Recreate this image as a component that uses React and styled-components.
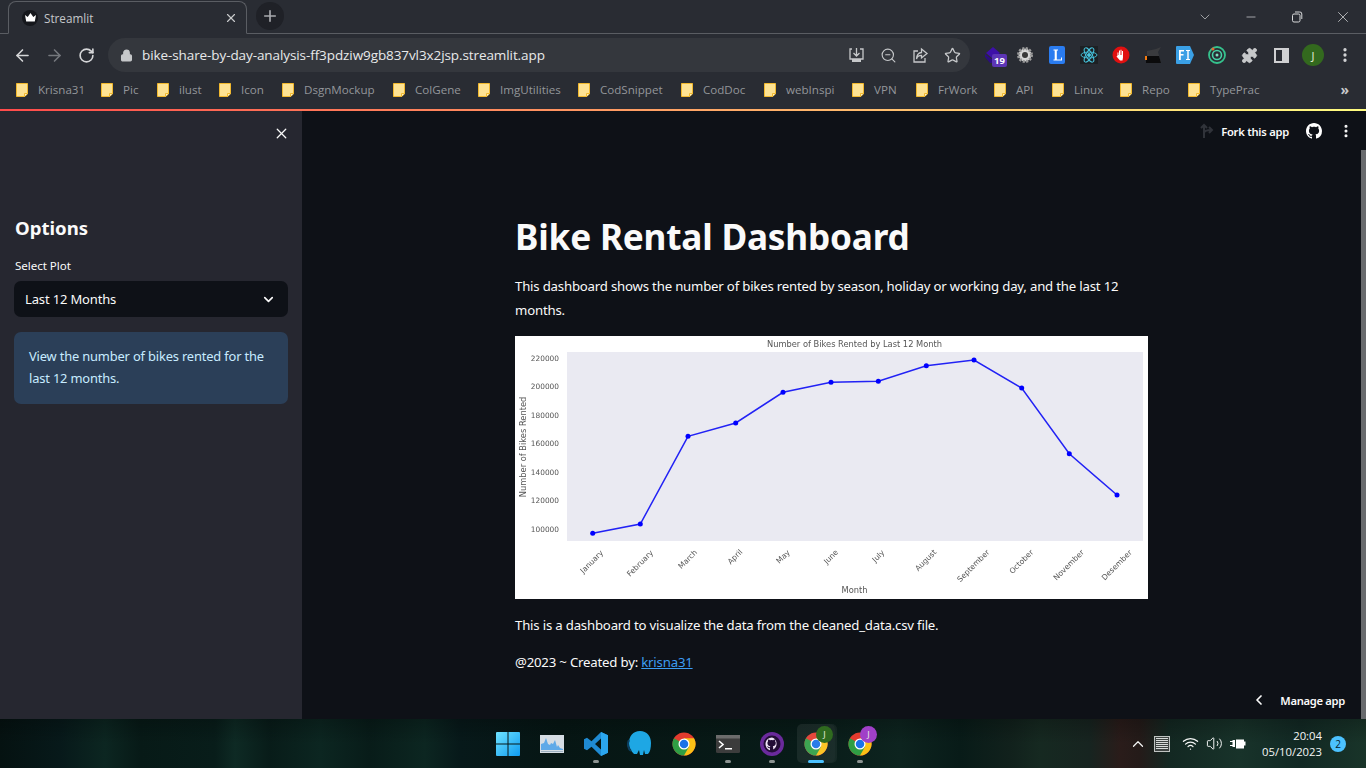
import React from "react";
import styled, { createGlobalStyle } from "styled-components";
import { ArrowLeft, ArrowRight, RotateCw, Lock, X, Plus, ChevronDown, ChevronLeft, ChevronUp, Minus, ZoomOut, Star, MoreVertical, Puzzle, Wifi, Volume2 } from "lucide-react";

const Global = createGlobalStyle`
  html, body { margin: 0; padding: 0; height: 100%; overflow: hidden; background: #0e1117; }
  * { box-sizing: border-box; }
`;

const Win = styled.div`
  width: 1366px; height: 768px; display: flex; flex-direction: column; overflow: hidden;
  font-family: "Open Sans", "Noto Sans", sans-serif;
`;

/* ---------- tab strip ---------- */
const TabStrip = styled.div`
  height: 34px; flex: none; background: #292c33; display: flex; align-items: flex-end; padding-left: 8px;
  border-bottom: 1px solid #5a5d63; position: relative;
`;
const Tab = styled.div`
  width: 239px; height: 33px; margin-bottom: -1px; background: #292c33;
  border: 1px solid #5a5d63; border-bottom: 1px solid #292c33; border-radius: 8px 8px 0 0;
  display: flex; align-items: center; padding: 0 8px 0 13px; color: #c5c7ca; font-size: 11.7px;
`;
const TabIcon = styled.span`
  width: 16px; height: 16px; border-radius: 50%; background: #15171c; display: flex; align-items: center; justify-content: center; margin-right: 6px;
`;
const TabTitle = styled.span` flex: 1; `;
const NewTab = styled.div`
  width: 28px; height: 28px; margin: 0 0 3px 9px; border-radius: 50%; background: #1f2127; color: #a9abaf; display: flex; align-items: center; justify-content: center;
`;
const WinControls = styled.div`
  margin-left: auto; width: 184px; height: 33px; padding-left: 0; display: grid; grid-template-columns: repeat(4, 46px); align-items: center; justify-items: center; color: #d8d9db;
`;

/* ---------- toolbar ---------- */
const Toolbar = styled.div`
  height: 38px; flex: none; background: #292c33; display: flex; align-items: center; padding: 4px 0 0 6px;
`;
const NavBtn = styled.div`
  width: 32px; display: flex; justify-content: center; color: ${p => p.$dim ? "#75787d" : "#d5d6d8"};
`;
const Omni = styled.div`
  width: 862px; height: 34px; margin-left: 6px; border-radius: 17px; background: #34373d; display: flex; align-items: center; padding-left: 12px; color: #e8e9ea;
`;
const Url = styled.span` margin-left: 9px; flex: 1; font-size: 13.5px; letter-spacing: -0.09px; white-space: nowrap; `;
const OmniIcons = styled.div` display: flex; color: #c6c8ca; margin-right: 2px; `;
const OmniIcon = styled.span` width: 32px; display: flex; justify-content: center; `;
const Exts = styled.div` display: flex; margin-left: 7px; `;
const Ext = styled.span` width: 32px; height: 24px; display: flex; align-items: center; justify-content: center; position: relative; color: #d5d6d8; `;
const ExtBadge = styled.span`
  position: absolute; left: 15px; top: 11px; width: 15px; height: 13px; background: #5c35b5; border-radius: 2px; color: #fff; font: 700 9.5px/13px "Open Sans", sans-serif; text-align: center;
`;
const Avatar = styled.span`
  width: 22px; height: 22px; border-radius: 50%; background: #33691e; color: #e7f0d8; font-size: 11px; display: flex; align-items: center; justify-content: center;
`;

/* ---------- bookmarks ---------- */
const Bookmarks = styled.div`
  height: 37px; flex: none; background: #292c33; display: flex; align-items: center; padding: 0 0 2px 16px; color: #93969a; font-size: 11.6px;
`;
const Bookmark = styled.div` display: flex; align-items: center; width: ${p => p.$w}px; flex: none; `;
const BookmarkLabel = styled.span` margin-left: 10px; white-space: nowrap; `;
const More = styled.span` margin-left: auto; margin-right: 17px; color: #c8c9cb; font-size: 14px; font-weight: 700; line-height: 1; `;

const Decoration = styled.div`
  height: 2px; flex: none; background: linear-gradient(90deg, #ff4b4b, #fffd80);
`;

/* ---------- app ---------- */
const AppRow = styled.div` flex: 1; min-height: 0; display: flex; position: relative; background: #0e1117; color: #fafafa; font-family: "Noto Sans", "Open Sans", sans-serif; `;
const Sidebar = styled.aside` width: 302px; flex: none; background: #262730; padding: 0 14px; display: flex; flex-direction: column; `;
const SideClose = styled.div` height: 44px; display: flex; align-items: center; justify-content: flex-end; color: #fafafa; `;
const SideCloseIcon = styled(X)` margin-right: -2px; `;
const SideTitle = styled.h2` margin: 59px 0 0 1px; font-size: 18.6px; line-height: 28px; font-weight: 700; `;
const SideLabel = styled.label` margin: 14px 0 0 1px; font-size: 11.6px; line-height: 20px; font-weight: 400; letter-spacing: -0.05px; display: block; `;
const Select = styled.div`
  margin-top: 5px; height: 36px; border-radius: 7px; background: #0e1117; display: flex; align-items: center; justify-content: space-between; padding: 0 12px 0 11px; font-size: 13px; letter-spacing: -0.15px;
`;
const Info = styled.div`
  margin-top: 15px; height: 72px; border-radius: 7px; background: #2b3f58; color: #c7ebff; padding: 13px 15px; font-size: 12.9px; letter-spacing: -0.17px; line-height: 22px;
`;
const Main = styled.main` flex: 1; padding-right: 5px; display: flex; justify-content: center; position: relative; `;
const Content = styled.div` width: 633px; padding-top: 102px; `;
const Title = styled.h1` margin: 0; font-size: 35.2px; line-height: 46px; font-weight: 700; letter-spacing: -0.2px; `;
const Para = styled.p` margin: ${p => p.$mt || 0}px 0 0; font-size: 13.2px; letter-spacing: -0.19px; line-height: 24px; `;
const A = styled.a` color: #3d9df3; text-decoration: underline; `;
const Chart = styled.svg` display: block; margin-top: 14px; width: 633px; height: 263px; background: #fff; `;
const ChartInk = styled.g` filter: blur(0.3px); `;
const TopRight = styled.div` position: absolute; top: 9px; right: 4px; height: 22px; display: flex; align-items: center; color: #fafafa; font-size: 11.2px; letter-spacing: -0.25px; font-weight: 600; `;
const ForkLabel = styled.span` margin: 0 17px 0 7px; `;
const Dots = styled.span` width: 32px; margin-left: 8px; display: flex; justify-content: center; `;
const ManageApp = styled.div` position: absolute; right: 21px; bottom: 11px; display: flex; align-items: center; gap: 13px; font-size: 11.2px; letter-spacing: -0.3px; font-weight: 600; `;
const ScrollThumb = styled.div` position: absolute; right: 0; top: 39px; bottom: 0; width: 5px; background: #686a6d; `;

/* ---------- taskbar ---------- */
const Taskbar = styled.footer`
  height: 49px; flex: none; position: relative; color: #f4f6f5; display: grid; grid-template-columns: 1fr auto 1fr; padding-left: 2px;
  background:
    linear-gradient(180deg, rgba(0,0,0,.22), rgba(0,0,0,0) 50%),
    linear-gradient(90deg, #051211 0, #07191a 60px, #0c2621 105px, #071a17 140px, #081d1a 215px, #0e2a24 235px, #081c19 270px, #0c2621 320px, #081c19 370px, #0c2621 425px, #07191a 460px, #061614 560px, #081b18 800px, #0d241f 900px, #081b18 960px, #11211c 1010px, #162921 1040px, #172420 1090px, #2a1c1a 1120px, #241b19 1140px, #132822 1170px, #18332a 1240px, #122924 1300px, #193429 1366px);
`;
const Center = styled.div` grid-column: 2; display: flex; align-items: center; `;
const TaskIcon = styled.div`
  width: 44px; height: 49px; display: flex; align-items: center; justify-content: center; position: relative;
  &::after {
    content: ""; display: ${p => p.$run ? "block" : "none"}; position: absolute; bottom: 5px; left: 50%; transform: translateX(-50%);
    width: ${p => p.$active ? 16 : 6}px; height: 3px; border-radius: 2px; background: ${p => p.$active ? "#4cc2ff" : "#8d9492"};
  }
  ${p => p.$active && `&::before { content: ""; position: absolute; left: 3px; top: 5px; width: 38px; height: 39px; border-radius: 5px; background: rgba(255,255,255,.07); box-shadow: 2px 0 0 rgba(255,255,255,.05); }`}
`;
const Corner = styled.span`
  position: absolute; right: 5px; top: 7px; width: 17px; height: 17px; border-radius: 50%; background: ${p => p.$bg}; color: #e6efe0; font-size: 9px; display: flex; align-items: center; justify-content: center;
`;
const Tray = styled.div` grid-column: 3; display: flex; align-items: center; justify-content: flex-end; padding-right: 20px; `;
const TrayIcon = styled.span` width: 24px; margin-left: ${p => p.$ml || 0}px; display: flex; justify-content: center; `;
const Clock = styled.div` margin: 0 8px 0 12px; text-align: right; font-size: 11.3px; line-height: 16px; `;
const Notif = styled.span` width: 16px; height: 16px; border-radius: 50%; background: #4cc2ff; color: #06222f; font-size: 10px; display: flex; align-items: center; justify-content: center; `;

/* ---------- data ---------- */
const pts = [[592.7,533.3],[640.3,524],[688,436.3],[735.7,423],[783,392.3],[831,382.3],[878.3,381.3],[926.3,365.7],[974,360],[1021.7,388],[1069.3,453.7],[1117,495]];
const yt = [[220000,358.3],[200000,386.7],[180000,415.2],[160000,443.7],[140000,472.2],[120000,500.5],[100000,529]];
const months = [["January",591.7,561.7],["February",640,563.3],["March",687.7,559.3],["April",735,556.7],["May",783,556.7],["June",831,556.7],["July",878.3,556],["August",925.7,560.3],["September",973.3,565.7],["October",1021.3,561.7],["November",1068.7,565],["Desember",1116.7,565]];
const bm = [["Krisna31",85],["Pic",56],["ilust",62],["Icon",63],["DsgnMockup",111],["ColGene",85],["ImgUtilities",100],["CodSnippet",103],["CodDoc",83],["webInspi",88],["VPN",64],["FrWork",78],["API",58],["Linux",68],["Repo",68],["TypePrac",100]];

const Folder = () => (
  <svg width="12" height="14" viewBox="0 0 12 14"><path d="M.5.5h11v10.300L8.800 13.500H.5z" fill="#fde293" stroke="#f2b92e" /><path d="M8.500 13.500v-3h3" fill="#fff3c4" stroke="#f2b92e" /></svg>
);
const Crown = () => (<svg width="11" height="9" viewBox="0 0 11 9"><path d="M0 2l2.700 2L5.500 0l2.800 4L11 2l-1.200 6.500H1.200z" fill="#fff" /></svg>);
const ChromeLogo = ({ s = 24 }) => (
  <svg width={s} height={s} viewBox="0 0 48 48">
    <circle cx="24" cy="24" r="23" fill="#e33b2e" />
    <path d="M24 47a23 23 0 0 0 20-34.500H24z" fill="#fbc116" />
    <path d="M4 12.500A23 23 0 0 0 24 47l10-17.500L24 24z" fill="#2f9e44" />
    <circle cx="24" cy="24" r="11" fill="#fff" /><circle cx="24" cy="24" r="8.500" fill="#1a73e8" />
  </svg>
);

export default function App() {
  return (
    <Win>
      <Global />
      <TabStrip>
        <Tab><TabIcon><Crown /></TabIcon><TabTitle>Streamlit</TabTitle><X size={14} color="#c8c9cb" /></Tab>
        <NewTab><Plus size={18} strokeWidth={2.2} /></NewTab>
        <WinControls>
          <ChevronDown size={16} strokeWidth={1} />
          <Minus size={14} strokeWidth={1.2} />
          <svg width="12" height="12" viewBox="0 0 12 12" fill="none" stroke="currentColor"><rect x="1.500" y="3" width="7.500" height="8" rx="1.500" /><path d="M4 1h4.500A2 2 0 0 1 10.800 3v5" /></svg>
          <X size={18} strokeWidth={1} />
        </WinControls>
      </TabStrip>
      <Toolbar>
        <NavBtn><ArrowLeft size={19} strokeWidth={2} /></NavBtn>
        <NavBtn $dim><ArrowRight size={19} strokeWidth={2} /></NavBtn>
        <NavBtn><RotateCw size={17} strokeWidth={2.3} /></NavBtn>
        <Omni>
          <Lock size={13} strokeWidth={2.4} color="#c6c8ca" fill="#c6c8ca" />
          <Url>bike-share-by-day-analysis-ff3pdziw9gb837vl3x2jsp.streamlit.app</Url>
          <OmniIcons>
            <OmniIcon><svg width="17" height="17" viewBox="0 0 17 17" fill="none" stroke="currentColor" strokeWidth="1.300"><path d="M4 2H2v10h13V2h-3M8.500 1v7.500M5.500 6l3 3 3-3" /><path d="M4 12h9v3H4z" fill="currentColor" stroke="none" /></svg></OmniIcon>
            <OmniIcon><ZoomOut size={17} strokeWidth={1.6} /></OmniIcon>
            <OmniIcon><svg width="17" height="17" viewBox="0 0 17 17" fill="none" stroke="currentColor" strokeWidth="1.300"><path d="M6 4H2v11h11v-4M9.500 2l5.500 4.500-5.500 4.500V8.300C6.500 8.300 5 10 4.500 12c0-3.500 2-6.500 5-6.500z" /></svg></OmniIcon>
            <OmniIcon><Star size={17} strokeWidth={1.8} /></OmniIcon>
          </OmniIcons>
        </Omni>
        <Exts>
          <Ext><svg width="18" height="18" viewBox="0 0 18 18"><path d="M9 1l7 6-7 6-7-6z" fill="#3d10a8" /><path d="M1 8l8 6 3 3H6L1 11z" fill="#2c0d80" /></svg><ExtBadge>19</ExtBadge></Ext>
          <Ext><svg width="18" height="18" viewBox="0 0 18 18"><circle cx="9" cy="9" r="6.500" fill="#d8d8d8" stroke="#9a9a9a" strokeWidth="3" strokeDasharray="2 1.400" /><circle cx="9" cy="9" r="3" fill="#3a3a3a" /></svg></Ext>
          <Ext><svg width="16" height="18" viewBox="0 0 16 18"><rect width="16" height="18" rx="2" fill="#2a7cf0" /><path d="M4.500 3.500h4.500v1H7.800v9H12v-2h1v3H4.500v-1h1.200v-9H4.500z" fill="#fff" /></svg></Ext>
          <Ext><svg width="18" height="18" viewBox="0 0 18 18" fill="none" stroke="#46c3dd" strokeWidth=".9"><rect width="18" height="18" fill="#1d2023" stroke="none" /><circle cx="9" cy="9" r="1.500" fill="#46c3dd" /><ellipse cx="9" cy="9" rx="8" ry="3" /><ellipse cx="9" cy="9" rx="8" ry="3" transform="rotate(60 9 9)" /><ellipse cx="9" cy="9" rx="8" ry="3" transform="rotate(120 9 9)" /></svg></Ext>
          <Ext><svg width="18" height="18" viewBox="0 0 18 18"><circle cx="9" cy="9" r="8.500" fill="#e01010" /><path d="M5.500 9.500V6.500h1V9h.5V4.500h1V9h.5V3.800h1V9h.5V5h1v6.500L10.500 14.500H8L4.500 10.500z" fill="#fff" /></svg></Ext>
          <Ext><svg width="18" height="18" viewBox="0 0 18 18"><path d="M3 5l9-2 5-2-3 5 3 11H3z" fill="#3a3b3e" /><path d="M2 10h13l2 7H2z" fill="#0b0b0c" /><path d="M1 10h2v4H1z" fill="#f47a10" /></svg></Ext>
          <Ext><svg width="18" height="18" viewBox="0 0 18 18"><path d="M1 0h13l4 9-4 9H1a1 1 0 0 1-1-1V1a1 1 0 0 1 1-1z" fill="#3aa0e6" /><path d="M3 4h5v1.500H4.800V8H7.500v1.500H4.800V14H3zM10 4h4v1h-1.300v8H14v1h-4v-1h1.300V5H10z" fill="#fff" /></svg></Ext>
          <Ext><svg width="18" height="18" viewBox="0 0 18 18" fill="none"><circle cx="9" cy="9" r="8" stroke="#35c28d" strokeWidth="1.800" /><circle cx="9" cy="9" r="4.500" stroke="#48d0a6" strokeWidth="1.600" /><circle cx="9" cy="9" r="1.500" fill="#7de0c0" /><circle cx="5" cy="3" r="1.500" fill="#e86a33" /></svg></Ext>
          <Ext><Puzzle size={17} fill="#c6c8ca" strokeWidth={1} /></Ext>
          <Ext><svg width="15" height="15" viewBox="0 0 15 15"><path d="M0 0h15v15H0zM2 2v11h6V2z" fill="#cfd0d2" fillRule="evenodd" /></svg></Ext>
          <Ext><Avatar>J</Avatar></Ext>
          <Ext><MoreVertical size={18} strokeWidth={2.4} /></Ext>
        </Exts>
      </Toolbar>
      <Bookmarks>
        {bm.map(([t, w]) => <Bookmark key={t} $w={w}><Folder /><BookmarkLabel>{t}</BookmarkLabel></Bookmark>)}
        <More>»</More>
      </Bookmarks>
      <Decoration />
      <AppRow>
        <Sidebar>
          <SideClose><SideCloseIcon size={17} strokeWidth={1.8} /></SideClose>
          <SideTitle>Options</SideTitle>
          <SideLabel>Select Plot</SideLabel>
          <Select>Last 12 Months<ChevronDown size={15} strokeWidth={2.6} /></Select>
          <Info>View the number of bikes rented for the last 12 months.</Info>
        </Sidebar>
        <Main>
          <Content>
            <Title>Bike Rental Dashboard</Title>
            <Para $mt={15}>This dashboard shows the number of bikes rented by season, holiday or working day, and the last 12 months.</Para>
            <Chart viewBox="515 336 633 263" xmlns="http://www.w3.org/2000/svg">
              <rect x="567" y="352" width="576" height="189" fill="#eaeaf2" />
              <ChartInk fontFamily="'DejaVu Sans', sans-serif" fontSize="7.400" fill="#555">
                <text x="854.500" y="347" textAnchor="middle" fontSize="8.300">Number of Bikes Rented by Last 12 Month</text>
                {yt.map(([v, y]) => <text key={v} x="559" y={y + 2.6} textAnchor="end">{v}</text>)}
                <text transform="translate(525.500 447) rotate(-90)" textAnchor="middle" fontSize="8.300">Number of Bikes Rented</text>
                {months.map(([m, x, y]) => <text key={m} x={x} y={y + 2.6} textAnchor="middle" fontSize="7.600" transform={`rotate(-45 ${x} ${y})`}>{m}</text>)}
                <text x="854.500" y="593" textAnchor="middle" fontSize="8.300">Month</text>
              </ChartInk>
              <ChartInk>
                <polyline points={pts.map(p => p.join(",")).join(" ")} fill="none" stroke="#2222f5" strokeWidth="1.500" />
                {pts.map(([x, y]) => <circle key={x} cx={x} cy={y} r="2.500" fill="#0000ff" />)}
              </ChartInk>
            </Chart>
            <Para $mt={14}>This is a dashboard to visualize the data from the cleaned_data.csv file.</Para>
            <Para $mt={13}>@2023 ~ Created by: <A href="#">krisna31</A></Para>
          </Content>
          <TopRight>
            <svg width="14" height="16" viewBox="0 0 14 16" fill="none" stroke="#30333a" strokeWidth="2"><path d="M4 15V2M1 5l3-3 3 3M4 10c0-2 3-3 8-3M9 4l3 3-3 3" /></svg>
            <ForkLabel>Fork this app</ForkLabel>
            <svg width="16" height="16" viewBox="0 0 16 16" fill="#fff"><path d="M8 0C3.580 0 0 3.580 0 8c0 3.540 2.290 6.530 5.470 7.590.4.070.55-.17.55-.38 0-.19-.01-.82-.01-1.490-2.010.37-2.530-.49-2.690-.94-.09-.23-.48-.94-.82-1.130-.28-.15-.68-.52-.01-.53.63-.01 1.080.58 1.230.82.720 1.210 1.870.87 2.330.66.070-.52.280-.87.510-1.070-1.780-.2-3.640-.89-3.640-3.950 0-.87.310-1.590.820-2.150-.08-.2-.36-1.020.080-2.120 0 0 .67-.21 2.200.820.640-.18 1.320-.27 2-.27s1.360.09 2 .27c1.530-1.040 2.200-.82 2.200-.82.440 1.100.160 1.920.080 2.120.51.560.82 1.270.82 2.150 0 3.070-1.870 3.750-3.650 3.950.29.250.54.730.54 1.480 0 1.070-.01 1.930-.01 2.200 0 .21.150.46.550.38A8.013 8.013 0 0 0 16 8c0-4.420-3.580-8-8-8z" /></svg>
            <Dots><MoreVertical size={16} strokeWidth={2.6} /></Dots>
          </TopRight>
          <ManageApp><ChevronLeft size={16} strokeWidth={2.6} />Manage app</ManageApp>
          <ScrollThumb />
        </Main>
      </AppRow>
      <Taskbar>
        <Center>
          <TaskIcon><svg width="24" height="24" viewBox="0 0 24 24"><defs><linearGradient id="w" x1="0" y1="0" x2="1" y2="1"><stop offset="0" stopColor="#6fe3ff" /><stop offset="1" stopColor="#0f9bf0" /></linearGradient></defs><path d="M0 1a1 1 0 0 1 1-1h10.500v11.500H0zM12.500 0H23a1 1 0 0 1 1 1v10.500H12.500zM0 12.500h11.500V24H1a1 1 0 0 1-1-1zM12.500 12.500H24V23a1 1 0 0 1-1 1H12.500z" fill="url(#w)" /></svg></TaskIcon>
          <TaskIcon><svg width="24" height="18" viewBox="0 0 24 18"><rect width="24" height="18" fill="#d6dde4" /><path d="M1 15V9l3-1 2-5 2 6 2 1 1-2 2 1 2-4 2 7 1-2 2 3 3 1v1z" fill="#5ea9e8" /><path d="M1 16h22v1H1z" fill="#9db0c0" /></svg></TaskIcon>
          <TaskIcon $run><svg width="24" height="24" viewBox="0 0 24 24"><path d="M17 0l7 3.300v17.400L17 24 7.500 14.800 3 18.300 0 16.800V7.200l3-1.500 4.500 3.500zM17 6.500L11 12l6 5.500z" fill="#1f8ad2" /><path d="M17 0l7 3.300v17.400L17 24z" fill="#2ba6ee" /></svg></TaskIcon>
          <TaskIcon><svg width="26" height="28" viewBox="0 0 26 28"><path d="M13 1c7 0 11 5 11 12 0 5-1 9-3 11h-3l-1-4-1 5h-3l-1-5-2 4H7C4 21 2 18 2 13 2 6 6 1 13 1z" fill="#1ea7e4" /><path d="M2 10C0 14 1 19 4 21" stroke="#0c3e5e" strokeWidth="2" fill="none" /></svg></TaskIcon>
          <TaskIcon><ChromeLogo s={24} /></TaskIcon>
          <TaskIcon $run><svg width="24" height="18" viewBox="0 0 24 18"><rect width="24" height="18" rx="1.500" fill="#3c3c3c" /><rect width="24" height="3.500" fill="#6c6c6c" /><path d="M3 6l4 3.500-4 3.500" fill="none" stroke="#fff" strokeWidth="1.600" /><path d="M9 13h7v1.500H9z" fill="#fff" /></svg></TaskIcon>
          <TaskIcon $run><svg width="24" height="24" viewBox="0 0 24 24"><circle cx="12" cy="12" r="12" fill="#6a2a9c" /><circle cx="12" cy="12" r="8.500" fill="#230d36" /><path d="M12 5.500a6.500 6.500 0 0 0-2 12.700v-2c-1.800.4-2.200-.9-2.200-.9-.3-.7-.7-1-.7-1-.6-.4 0-.4 0-.4.700.1 1 .7 1 .7.600 1 1.500.7 1.900.5.100-.4.200-.7.400-.9-1.400-.2-3-.7-3-3.200 0-.7.300-1.300.700-1.700-.1-.2-.3-.8.100-1.700 0 0 .5-.2 1.800.700a6 6 0 0 1 3.200 0c1.300-.9 1.800-.7 1.800-.7.400.9.200 1.500.1 1.700.4.400.700 1 .700 1.700 0 2.500-1.600 3-3 3.200.2.200.4.600.4 1.200v2A6.500 6.500 0 0 0 12 5.500z" fill="#f1e6f8" /></svg></TaskIcon>
          <TaskIcon $run $active><ChromeLogo s={24} /><Corner $bg="#2f6a1f">J</Corner></TaskIcon>
          <TaskIcon $run><ChromeLogo s={24} /><Corner $bg="#a040c8">J</Corner></TaskIcon>
        </Center>
        <Tray>
          <TrayIcon><ChevronUp size={18} strokeWidth={1.6} /></TrayIcon>
          <TrayIcon><svg width="16" height="16" viewBox="0 0 16 16"><rect x=".5" y=".5" width="15" height="15" fill="#3e4341" stroke="#bfc3c1" /><path d="M2 2.500h12M2 4.500h12M2 6.500h12M2 8.500h12M2 10.500h12M2 12.500h12" stroke="#d8dbd9" strokeWidth="1" /></svg></TrayIcon>
          <TrayIcon $ml={4}><Wifi size={17} strokeWidth={1.8} /></TrayIcon>
          <TrayIcon><Volume2 size={17} strokeWidth={1.4} /></TrayIcon>
          <TrayIcon><svg width="17" height="12" viewBox="0 0 17 12" fill="#fff"><path d="M0 3.500h3M0 7.500h3" stroke="#fff" /><path d="M2.500 2h2.500v7H2.500zM6 1.500h8v2h1.500v4H14v3H6z" /></svg></TrayIcon>
          <Clock>20:04<br />05/10/2023</Clock>
          <Notif>2</Notif>
        </Tray>
      </Taskbar>
    </Win>
  );
}
